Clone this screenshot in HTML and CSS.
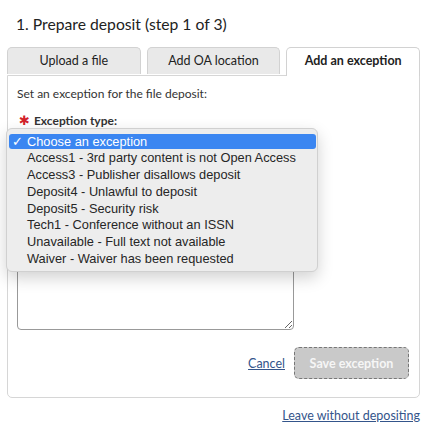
FILE: index.html
```html
<!DOCTYPE html>
<html>
<head>
<meta charset="utf-8">
<link rel="stylesheet" href="styles.css">
</head>
<body>
<div class="page">
  <h1 class="title">1. Prepare deposit (step 1 of 3)</h1>
  <div class="tabs">
    <div class="tab">Upload a file</div>
    <div class="tab">Add OA location</div>
    <div class="tab active">Add an exception</div>
  </div>
  <div class="panel">
    <p class="intro">Set an exception for the file deposit:</p>
    <div class="label"><span class="req">✱</span>Exception type:</div>
    <div class="select-box"></div>
    <textarea class="explain"></textarea>
    <div class="actions">
      <a class="link cancel" href="#">Cancel</a>
      <button class="save" disabled>Save exception</button>
    </div>
  </div>
  <div class="leave-row"><a class="link" href="#">Leave without depositing</a></div>

  <div class="menu">
    <div class="opt selected"><span class="check">✓</span>Choose an exception</div>
    <div class="opt">Access1 - 3rd party content is not Open Access</div>
    <div class="opt">Access3 - Publisher disallows deposit</div>
    <div class="opt">Deposit4 - Unlawful to deposit</div>
    <div class="opt">Deposit5 - Security risk</div>
    <div class="opt">Tech1 - Conference without an ISSN</div>
    <div class="opt">Unavailable - Full text not available</div>
    <div class="opt">Waiver - Waiver has been requested</div>
  </div>
</div>
</body>
</html>
```
FILE: styles.css
```css
html, body {
  margin: 0;
  padding: 0;
  background: #ffffff;
}
body {
  font-family: Lato, "Open Sans", sans-serif;
  color: #222;
}
.page {
  position: relative;
  width: 413px;
  padding: 14px 0 0 7px;
}
.title {
  margin: 0 0 13px 9px;
  font-size: 15.7px;
  line-height: 20px;
  font-weight: 400;
  color: #222;
}
.tabs {
  display: flex;
  gap: 6px;
}
.tab {
  flex: 1;
  height: 26px;
  line-height: 26px;
  text-align: center;
  font-size: 12.5px;
  color: #222;
  background: #e9e9e9;
  border: 1px solid #d2d2d2;
  border-bottom: none;
  border-radius: 5px 5px 0 0;
}
.tab.active {
  background: #fff;
  font-weight: 700;
  position: relative;
  height: 28px;
  margin-bottom: -1px;
  z-index: 1;
}
.panel {
  border: 1px solid #d6d6d6;
  border-radius: 0 0 5px 5px;
  padding: 11px 10px 18px 9px;
  display: flex;
  flex-direction: column;
}
.intro {
  margin: 0;
  font-size: 12px;
  line-height: 14px;
  color: #333;
}
.label {
  margin-top: 13px;
  font-size: 12px;
  line-height: 14px;
  font-weight: 700;
  color: #333;
  display: flex;
  align-items: center;
}
.req {
  color: #d3222a;
  font-family: "DejaVu Sans", sans-serif;
  font-size: 13px;
  margin: 0 4px 0 2px;
  line-height: 14px;
}
.select-box {
  margin-top: 4px;
  width: 276px;
  height: 22px;
  border: 1px solid #999;
  border-radius: 4px;
}
.explain {
  margin-top: 10px;
  width: 277px;
  height: 164px;
  box-sizing: border-box;
  border: 1px solid #999;
  border-radius: 4px;
  padding: 4px;
  font-family: inherit;
  resize: both;
}
.actions {
  margin-top: 17px;
  display: flex;
  justify-content: flex-end;
  align-items: center;
  gap: 9px;
}
.link {
  color: #34558b;
  font-size: 12.5px;
  text-decoration: underline;
}
.save {
  width: 115px;
  height: 32px;
  background: #c9c9c9;
  border: 1px dashed #777;
  border-radius: 5px;
  color: #f6f6f6;
  font-family: inherit;
  font-weight: 700;
  font-size: 12.5px;
  padding: 0;
}
.leave-row {
  display: flex;
  justify-content: flex-end;
  margin-top: 10px;
  line-height: 16px;
}
.menu {
  position: absolute;
  left: 6px;
  top: 128px;
  width: 312px;
  height: 144px;
  box-sizing: border-box;
  padding: 5px 1px 0 2px;
  background: #ededed;
  border: 1px solid #d0d0d0;
  border-radius: 6px;
  box-shadow: 0 6px 16px rgba(0,0,0,0.18);
  font-family: "Liberation Sans", Arial, sans-serif;
  font-size: 12.8px;
  color: #262626;
}
.opt {
  height: 16.85px;
  line-height: 16.85px;
  padding-left: 18px;
  position: relative;
  white-space: nowrap;
}
.opt.selected {
  background: #3b86f1;
  color: #fff;
  border-radius: 3px;
  height: 15px;
  line-height: 15px;
  margin-bottom: 1px;
}
.check {
  position: absolute;
  left: 3px;
  top: 0;
  font-family: "DejaVu Sans", sans-serif;
  font-size: 13px;
}
```
